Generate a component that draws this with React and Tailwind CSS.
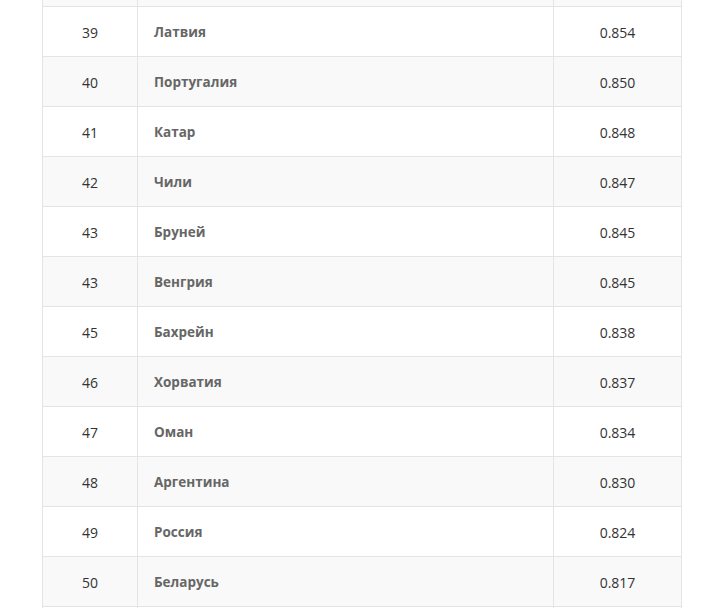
import React from "react";

const rows = [
  ["39", "Латвия", "0.854"],
  ["40", "Португалия", "0.850"],
  ["41", "Катар", "0.848"],
  ["42", "Чили", "0.847"],
  ["43", "Бруней", "0.845"],
  ["43", "Венгрия", "0.845"],
  ["45", "Бахрейн", "0.838"],
  ["46", "Хорватия", "0.837"],
  ["47", "Оман", "0.834"],
  ["48", "Аргентина", "0.830"],
  ["49", "Россия", "0.824"],
  ["50", "Беларусь", "0.817"],
];

const App = () => {
  return (
    <div
      className="h-[608px] w-[728px] overflow-hidden bg-white"
      style={{ fontFamily: '"Open Sans", "Liberation Sans", sans-serif' }}
    >
      <div className="ml-[42px] w-[640px] border-x border-[#e4e4e4]">
        {/* tail of the previous row */}
        <div className="flex h-[6px] bg-[#f9f9f9]">
          <div className="w-[94px]" />
          <div className="w-[416px] border-l border-[#e4e4e4]" />
          <div className="w-[128px] border-l border-[#e4e4e4]" />
        </div>
        {rows.map(([rank, country, value], i) => (
          <div
            key={i}
            className={`flex h-[50px] border-t border-[#e4e4e4] ${
              i % 2 === 1 ? "bg-[#f9f9f9]" : "bg-white"
            }`}
          >
            <div className="flex w-[94px] items-center justify-center pt-[1px] text-[14px] text-[#333]">
              {rank}
            </div>
            <div className="flex w-[416px] items-center border-l border-[#e4e4e4] pl-[16px] pt-[2px] text-[13.5px] font-bold text-[#666]">
              {country}
            </div>
            <div className="flex w-[128px] items-center justify-center border-l border-[#e4e4e4] pt-[1px] text-[14px] text-[#333]">
              {value}
            </div>
          </div>
        ))}
        <div className="flex h-[50px] border-t border-[#e4e4e4] bg-white">
          <div className="w-[94px]" />
          <div className="w-[416px] border-l border-[#e4e4e4]" />
          <div className="w-[128px] border-l border-[#e4e4e4]" />
        </div>
      </div>
    </div>
  );
};

export default App;
